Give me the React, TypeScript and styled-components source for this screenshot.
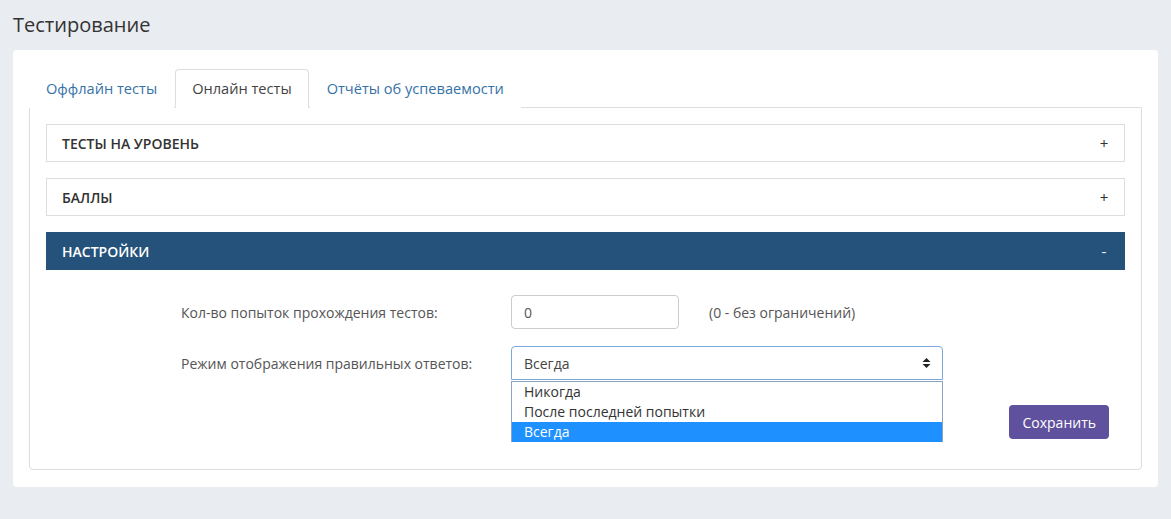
import { useState } from "react";
import styled, { createGlobalStyle } from "styled-components";

const GlobalStyle = createGlobalStyle`
  * {
    box-sizing: border-box;
  }

  body {
    margin: 0;
    background: #e9ecf0;
    font-family: "Open Sans", "Liberation Sans", sans-serif;
    font-size: 14px;
    color: #333;
  }
`;

const Page = styled.div`
  padding: 14px 13px 32px;
`;

const Title = styled.h1`
  margin: 0 0 14px;
  font-size: 20px;
  font-weight: 400;
  line-height: 22px;
  color: #333;
`;

const Card = styled.div`
  background: #fff;
  border-radius: 4px;
  padding: 19px 16px 17px;
`;

const TabList = styled.div`
  display: flex;
  align-items: flex-end;
`;

const Tab = styled.button<{ active?: boolean }>`
  font-family: inherit;
  font-size: 14.6px;
  line-height: 20px;
  padding: 8px 16px 9px;
  margin-right: 1px;
  margin-bottom: -1px;
  background: #fff;
  cursor: pointer;
  border: 1px solid ${({ active }) => (active ? "#ddd" : "transparent")};
  border-bottom-color: ${({ active }) => (active ? "#fff" : "transparent")};
  border-radius: 4px 4px 0 0;
  color: ${({ active }) => (active ? "#444" : "#3572a8")};
  position: relative;
  z-index: ${({ active }) => (active ? 1 : 0)};
`;

const TabPanel = styled.div`
  border: 1px solid #ddd;
  border-radius: 0 0 4px 4px;
  padding: 16px;
  display: flex;
  flex-direction: column;
  gap: 16px;
`;

const Section = styled.div``;

const SectionHeader = styled.div<{ open?: boolean }>`
  height: 38px;
  display: flex;
  align-items: center;
  justify-content: space-between;
  padding: 0 15px 0 15px;
  border: 1px solid ${({ open }) => (open ? "#24527a" : "#ddd")};
  background: ${({ open }) => (open ? "#24527a" : "#fff")};
  color: ${({ open }) => (open ? "#fff" : "#333")};
  font-size: 14px;
  font-weight: 600;
  text-transform: uppercase;
  cursor: pointer;
`;

const Toggle = styled.span`
  font-size: 15px;
  font-weight: 400;
  width: 10px;
  text-align: center;
`;

const FormBody = styled.div`
  padding: 25px 16px 14px 135px;
  display: flex;
  flex-direction: column;
  gap: 17px;
`;

const Row = styled.div`
  display: flex;
  align-items: center;
`;

const Label = styled.label`
  width: 330px;
  color: #555;
  font-size: 14px;
`;

const TextInput = styled.input`
  width: 168px;
  height: 34px;
  padding: 6px 12px;
  border: 1px solid #ccc;
  border-radius: 4px;
  font-family: inherit;
  font-size: 14px;
  color: #555;
  outline: none;
`;

const Hint = styled.span`
  margin-left: 30px;
  color: #555;
`;

const SelectWrap = styled.div`
  position: relative;
  width: 432px;
`;

const SelectBox = styled.div`
  height: 34px;
  display: flex;
  align-items: center;
  justify-content: space-between;
  padding: 0 11px 0 12px;
  border: 1px solid #7ba9dc;
  border-radius: 4px 4px 0 0;
  color: #444;
  cursor: pointer;
`;

const OptionList = styled.ul`
  position: absolute;
  top: 35px;
  left: 0;
  right: 0;
  margin: 0;
  padding: 0;
  list-style: none;
  border: 1px solid #8ea3bd;
  border-bottom: none;
  background: #fff;
  z-index: 2;
`;

const Option = styled.li<{ selected?: boolean }>`
  height: 20px;
  line-height: 19px;
  padding-left: 12px;
  font-size: 14px;
  background: ${({ selected }) => (selected ? "#1e90ff" : "#fff")};
  color: ${({ selected }) => (selected ? "#fff" : "#333")};
  cursor: default;
`;

const Actions = styled.div`
  display: flex;
  justify-content: flex-end;
  margin-top: 8px;
`;

const SaveButton = styled.button`
  height: 34px;
  padding: 0 13px;
  border: none;
  border-radius: 4px;
  background: #5f519d;
  color: #fff;
  font-family: inherit;
  font-size: 14px;
  cursor: pointer;
`;

const SortArrows = () => (
  <svg width="9" height="12" viewBox="0 0 9 12">
    <path d="M4.5 1 L8.5 5 H0.5 Z" fill="#222" />
    <path d="M4.5 11 L8.5 7 H0.5 Z" fill="#222" />
  </svg>
);

const tabs = ["Оффлайн тесты", "Онлайн тесты", "Отчёты об успеваемости"];
const modes = ["Никогда", "После последней попытки", "Всегда"];

export default function App() {
  const [tab, setTab] = useState(1);
  const [attempts, setAttempts] = useState("0");
  const [mode, setMode] = useState(2);

  return (
    <Page>
      <GlobalStyle />
      <Title>Тестирование</Title>
      <Card>
        <TabList>
          {tabs.map((t, i) => (
            <Tab key={t} active={i === tab} onClick={() => setTab(i)}>
              {t}
            </Tab>
          ))}
        </TabList>
        <TabPanel>
          <Section>
            <SectionHeader>
              Тесты на уровень
              <Toggle>+</Toggle>
            </SectionHeader>
          </Section>
          <Section>
            <SectionHeader>
              Баллы
              <Toggle>+</Toggle>
            </SectionHeader>
          </Section>
          <Section>
            <SectionHeader open>
              Настройки
              <Toggle>-</Toggle>
            </SectionHeader>
            <FormBody>
              <Row>
                <Label>Кол-во попыток прохождения тестов:</Label>
                <TextInput
                  value={attempts}
                  onChange={(e) => setAttempts(e.target.value)}
                />
                <Hint>(0 - без ограничений)</Hint>
              </Row>
              <Row>
                <Label>Режим отображения правильных ответов:</Label>
                <SelectWrap>
                  <SelectBox>
                    {modes[mode]}
                    <SortArrows />
                  </SelectBox>
                  <OptionList>
                    {modes.map((m, i) => (
                      <Option
                        key={m}
                        selected={i === mode}
                        onClick={() => setMode(i)}
                      >
                        {m}
                      </Option>
                    ))}
                  </OptionList>
                </SelectWrap>
              </Row>
              <Actions>
                <SaveButton>Сохранить</SaveButton>
              </Actions>
            </FormBody>
          </Section>
        </TabPanel>
      </Card>
    </Page>
  );
}
